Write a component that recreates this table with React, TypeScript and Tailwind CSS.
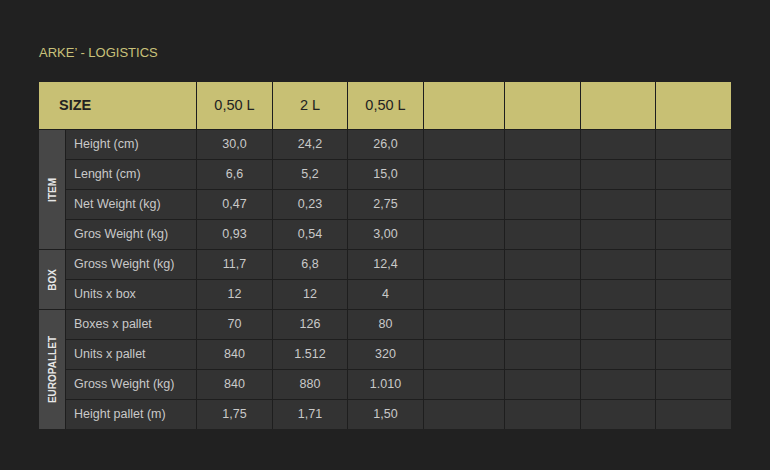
import React from "react";

const cols = ["0,50 L", "2 L", "0,50 L", "", "", "", ""];

type Row = { label: string; vals: string[] };
const groups: { name: string; rows: Row[]; span: string }[] = [
  {
    name: "ITEM",
    span: "row-span-4",
    rows: [
      { label: "Height (cm)", vals: ["30,0", "24,2", "26,0"] },
      { label: "Lenght (cm)", vals: ["6,6", "5,2", "15,0"] },
      { label: "Net Weight (kg)", vals: ["0,47", "0,23", "2,75"] },
      { label: "Gros Weight (kg)", vals: ["0,93", "0,54", "3,00"] },
    ],
  },
  {
    name: "BOX",
    span: "row-span-2",
    rows: [
      { label: "Gross Weight (kg)", vals: ["11,7", "6,8", "12,4"] },
      { label: "Units x box", vals: ["12", "12", "4"] },
    ],
  },
  {
    name: "EUROPALLET",
    span: "row-span-4",
    rows: [
      { label: "Boxes x pallet", vals: ["70", "126", "80"] },
      { label: "Units x pallet", vals: ["840", "1.512", "320"] },
      { label: "Gross Weight (kg)", vals: ["840", "880", "1.010"] },
      { label: "Height pallet (m)", vals: ["1,75", "1,71", "1,50"] },
    ],
  },
];

export default function App() {
  return (
    <div
      className="w-[770px] h-[470px] bg-[#212121] pl-[39px] pt-[45px]"
      style={{ fontFamily: '"Liberation Sans", Arial, sans-serif' }}
    >
      <div className="text-[13px] leading-[16px] text-[#c9c17a]">ARKE’ - LOGISTICS</div>
      <div className="mt-[21px] grid w-[692px] grid-cols-[26px_130px_75px_74px_75px_80px_75px_74px_75px] grid-rows-[47px_repeat(10,29px)] gap-px bg-[#1e1e1e]">
        <div className="col-span-2 flex items-center bg-[#c8c074] pl-[20px] pt-px text-[14.5px] font-bold text-[#222]">
          SIZE
        </div>
        {cols.map((c, i) => (
          <div
            key={i}
            className="flex items-center justify-center bg-[#c8c074] pt-px text-[14.5px] text-[#222]"
          >
            {c}
          </div>
        ))}
        {groups.map((g) =>
          g.rows.map((r, ri) => (
            <React.Fragment key={g.name + ri}>
              {ri === 0 && (
                <div
                  className={`${g.span} flex items-center justify-center bg-[#474747]`}
                >
                  <span className="rotate-180 text-[10px] font-bold text-[#e6e6e6] [writing-mode:vertical-rl]">
                    {g.name}
                  </span>
                </div>
              )}
              <div className="flex items-center bg-[#333333] pl-[8px] text-[12.5px] text-[#c9c9c9]">
                {r.label}
              </div>
              {[0, 1, 2, 3, 4, 5, 6].map((k) => (
                <div
                  key={k}
                  className="flex items-center justify-center bg-[#333333] text-[12.5px] text-[#c9c9c9]"
                >
                  {r.vals[k] ?? ""}
                </div>
              ))}
            </React.Fragment>
          ))
        )}
      </div>
    </div>
  );
}
